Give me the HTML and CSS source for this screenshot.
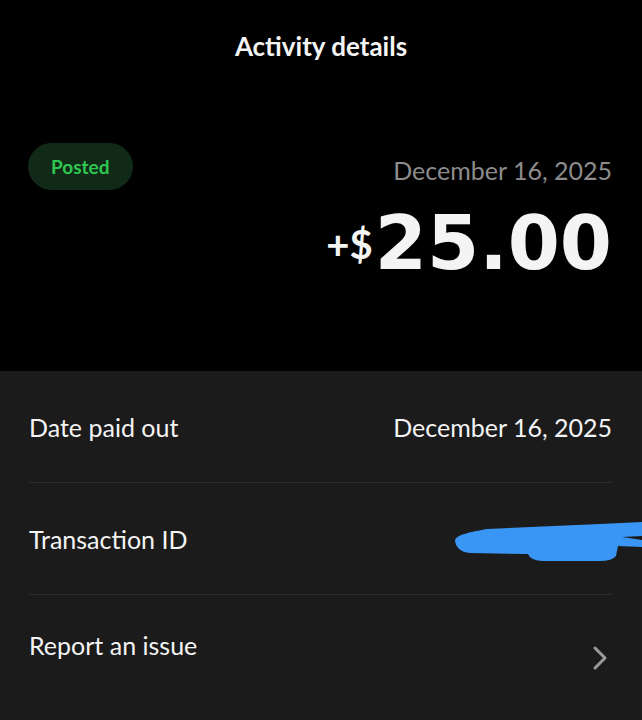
FILE: index.html
```html
<!doctype html>
<html lang="en">
<head>
    <meta charset="UTF-8">
    <title>Activity details</title>
    <link rel="stylesheet" href="styles.css">
</head>
<body>
    <div class="top">
        <div class="title">Activity details</div>
        <div class="hero">
            <div class="pill">Posted</div>
            <div class="summary">
                <div class="date">December 16, 2025</div>
                <div class="amount"><span class="sign">+$</span>25.00</div>
            </div>
        </div>
    </div>
    <div class="details">
        <div class="row">
            <span class="label">Date paid out</span>
            <span class="value">December 16, 2025</span>
        </div>
        <div class="row">
            <span class="label">Transaction ID</span>
            <span class="value">&nbsp;</span>
        </div>
        <div class="row">
            <span class="label">Report an issue</span>
            <svg class="chevron" width="16" height="26" viewBox="0 0 16 26">
                <path d="M3 3 L13 13 L3 23" fill="none" stroke="#9a9a9a" stroke-width="3" stroke-linecap="round" stroke-linejoin="round"/>
            </svg>
        </div>
        <!-- scribble over the transaction id -->
        <svg class="scribble" width="642" height="720" viewBox="0 0 642 720">
            <path d="M455 541 C455 535 470 532 487 529 L600 524 L642 522 L642 536 L622 537 L642 540 L642 547 L618 546 L616 556 Q612 561 600 561 L542 561 Q530 560 528 554 L470 553 Q457 552 455 541 Z" fill="#3a96f5"/>
        </svg>
    </div>
</body>
</html>
```

FILE: styles.css
```css
*{
    margin: 0;
    padding: 0;
    box-sizing: border-box;
}
body{
    width: 642px;
    height: 720px;
    overflow: hidden;
    background: #1b1b1b;
    font-family: Lato, "Open Sans", sans-serif;
    color: #f4f4f4;
}
.top{
    background: #000;
    height: 371px;
}
.title{
    height: 92px;
    line-height: 92px;
    text-align: center;
    font-size: 26px;
    font-weight: 700;
}
.hero{
    display: flex;
    justify-content: space-between;
    align-items: flex-start;
    padding: 51px 30px 0 28px;
}
.pill{
    height: 47px;
    line-height: 47px;
    padding: 0 23px;
    border-radius: 24px;
    background: #112a18;
    color: #2fc651;
    font-size: 19px;
    font-weight: 700;
}
.summary{
    text-align: right;
}
.date{
    margin-top: 12px;
    font-size: 25px;
    line-height: 30px;
    color: #8c8c8c;
}
.amount{
    margin-top: 13px;
    font-family: "DejaVu Sans", Lato, sans-serif;
    font-size: 75px;
    font-weight: 700;
    line-height: 90px;
}
.sign{
    font-family: Lato, sans-serif;
    font-size: 40px;
    font-weight: 700;
    vertical-align: 10px;
    margin-right: 2px;
}
.details{
    position: relative;
    padding: 0 30px 0 29px;
}
.row{
    height: 112px;
    display: flex;
    align-items: center;
    justify-content: space-between;
    border-bottom: 1px solid #2e2e2e;
    font-size: 25px;
}
.row:last-of-type{
    border-bottom: none;
    align-items: flex-start;
    padding-top: 35px;
}
.chevron{
    margin-top: 15px;
    margin-right: 4px;
}
.scribble{
    position: absolute;
    left: 0;
    top: -371px;
    pointer-events: none;
}
```
